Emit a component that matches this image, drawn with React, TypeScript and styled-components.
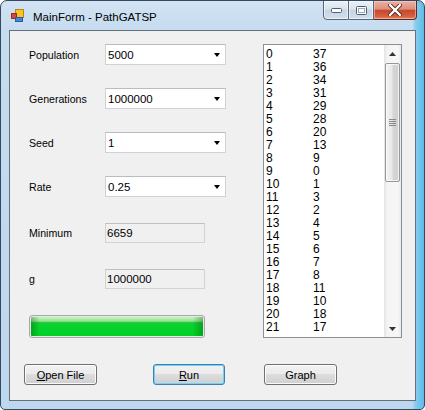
import React from "react";
import styled, { createGlobalStyle } from "styled-components";

const Global = createGlobalStyle`
  html, body { margin: 0; padding: 0; background: #ffffff; }
  * { box-sizing: border-box; }
`;

const Window = styled.div`
  width: 425px;
  height: 410px;
  border: 1px solid #34495f;
  border-radius: 7px 7px 5px 5px;
  background:
    linear-gradient(90deg, rgba(255,255,255,0) 97.2%, #86cdee 98%, #5bbbe9 100%),
    linear-gradient(180deg, #d2e3f3 0px, #c6dcf0 28px, #bdd7ee 100%);
  display: flex;
  flex-direction: column;
  padding: 0 8px 8px 8px;
  overflow: hidden;
  font-family: "Liberation Sans", Arial, sans-serif;
`;

const TitleBar = styled.div`
  height: 29px;
  display: flex;
  align-items: flex-start;
`;

const AppIcon = styled.svg`
  margin: 8px 0 0 2px;
  flex: none;
`;

const Title = styled.div`
  margin: 10px 0 0 9px;
  font-family: "Liberation Sans", Arial, sans-serif;
  font-size: 11.5px;
  color: #000;
  line-height: 12px;
  flex: 1;
`;

const CaptionGroup = styled.div`
  display: flex;
  margin-top: -1px;
  margin-right: -1px;
`;

const CapBtn = styled.div<{ $w: number }>`
  width: ${(p) => p.$w}px;
  height: 20px;
  border: 1px solid #566778;
  border-left-width: 0;
  background: linear-gradient(180deg, #eaf0f7 0%, #dbe5ef 45%, #c6d4e4 50%, #d2deeb 100%);
  box-shadow: inset 0 0 0 1px rgba(255,255,255,0.55);
  display: flex;
  align-items: center;
  justify-content: center;
  &:first-child {
    border-left-width: 1px;
    border-bottom-left-radius: 4px;
  }
`;

const CloseBtn = styled.div`
  width: 43px;
  height: 20px;
  border: 1px solid #5a2a22;
  border-left-width: 0;
  border-bottom-right-radius: 4px;
  background: linear-gradient(180deg, #eab1a4 0%, #de8f7c 45%, #c9472d 52%, #d4603f 85%, #e08866 100%);
  box-shadow: inset 0 0 0 1px rgba(255,220,210,0.5);
  display: flex;
  align-items: center;
  justify-content: center;
`;

const Client = styled.div`
  flex: 1;
  border: 1px solid #66707b;
  background: #f0f0f0;
  display: flex;
  flex-direction: column;
  font-family: "Liberation Sans", Arial, sans-serif;
  font-size: 11px;
  color: #000;
`;

const Main = styled.div`
  display: flex;
  padding: 13px 0 0 19px;
`;

const Form = styled.div`
  width: 234px;
  display: flex;
  flex-direction: column;
`;

const Row = styled.div<{ $h: number; $mt: number }>`
  height: ${(p) => p.$h}px;
  margin-top: ${(p) => p.$mt}px;
  display: flex;
  align-items: center;
`;

const Label = styled.div`
  width: 76px;
  font-size: 10.6px;
`;

const Combo = styled.div`
  width: 121px;
  height: 100%;
  background: #ffffff;
  border: 1px solid #cfd1d6;
  border-top-color: #b9bcc2;
  display: flex;
  align-items: center;
  padding-left: 2px;
  font-size: 11.5px;
`;

const ComboText = styled.span`
  flex: 1;
`;

const Arrow = styled.span`
  width: 0;
  height: 0;
  border-left: 3.5px solid transparent;
  border-right: 3.5px solid transparent;
  border-top: 4px solid #000;
  margin-right: 5px;
  margin-top: 1px;
`;

const TextBox = styled.div`
  width: 100px;
  height: 100%;
  background: #f0f0f0;
  border: 1px solid #d3d3d3;
  border-top-color: #c0c0c0;
  display: flex;
  align-items: center;
  padding-left: 1px;
  font-size: 11.5px;
`;

const Progress = styled.div`
  width: 176px;
  height: 100%;
  border: 1px solid #a9a9a9;
  border-radius: 3px;
  padding: 1px;
  background: #e6e6e6;
`;

const ProgressFill = styled.div`
  height: 100%;
  border-radius: 1px;
  background:
    linear-gradient(90deg, rgba(0,80,0,0.35) 0%, rgba(0,80,0,0) 5%, rgba(0,80,0,0) 94%, rgba(0,80,0,0.35) 100%),
    linear-gradient(180deg, #c7f3c2 0%, #8ee58d 22%, #19c83a 30%, #04d42a 55%, #02cf27 100%);
`;

const ListBox = styled.div`
  width: 139px;
  height: 294px;
  background: #ffffff;
  border: 1px solid #8a9099;
  display: flex;
  font-size: 12px;
`;

const ListItems = styled.div`
  flex: 1;
  padding: 3px 0 0 2px;
  overflow: hidden;
`;

const ListRow = styled.div`
  display: flex;
  height: 13px;
  line-height: 13px;
`;

const Cell = styled.span<{ $w?: number }>`
  width: ${(p) => (p.$w ? `${p.$w}px` : "auto")};
`;

const ScrollBar = styled.div`
  width: 17px;
  display: flex;
  flex-direction: column;
  background: linear-gradient(90deg, #e4e4e4 0%, #f4f4f4 20%, #f7f7f7 80%, #e9e9e9 100%);
`;

const ScrollArrow = styled.div`
  height: 17px;
  display: flex;
  align-items: center;
  justify-content: center;
`;

const Thumb = styled.div`
  margin: 1px 1px 0 1px;
  height: 119px;
  border: 1px solid #979797;
  border-radius: 2px;
  background: linear-gradient(90deg, #f3f3f3 0%, #e8e8e8 45%, #d6d6d6 55%, #cfcfcf 100%);
  box-shadow: inset 0 0 0 1px rgba(255,255,255,0.7);
  display: flex;
  align-items: center;
  justify-content: center;
`;

const Track = styled.div`
  flex: 1;
`;

const ButtonRow = styled.div`
  display: flex;
  padding-left: 14px;
  margin-top: 26px;
`;

const Button = styled.div<{ $w: number; $ml: number; $default?: boolean }>`
  width: ${(p) => p.$w}px;
  height: 21px;
  margin-left: ${(p) => p.$ml}px;
  border: 1px solid ${(p) => (p.$default ? "#3c7fb1" : "#707070")};
  border-radius: 3px;
  background: linear-gradient(180deg, #f2f2f2 0%, #ebebeb 48%, #dddddd 50%, #cfcfcf 100%);
  box-shadow: ${(p) =>
    p.$default
      ? "inset 0 0 0 1px #6fd3f6"
      : "inset 0 0 0 1px rgba(255,255,255,0.85)"};
  display: flex;
  align-items: center;
  justify-content: center;
  font-size: 11px;
`;

const Key = styled.span`
  text-decoration: underline;
`;

const values = [37, 36, 34, 31, 29, 28, 20, 13, 9, 0, 1, 3, 2, 4, 5, 6, 7, 8, 11, 10, 18, 17];

export default function App() {
  return (
    <>
      <Global />
      <Window>
        <TitleBar>
          <AppIcon width="13" height="14" viewBox="0 0 13 14">
            <rect x="4.5" y="0.5" width="8" height="8" fill="#f6c521" stroke="#b58a12" />
            <rect x="0.5" y="4.5" width="5" height="5" fill="#e0443a" stroke="#9b2a22" />
            <rect x="4.5" y="8.5" width="7" height="4" fill="#4a84d8" stroke="#2c5aa0" />
          </AppIcon>
          <Title>MainForm - PathGATSP</Title>
          <CaptionGroup>
            <CapBtn $w={26}>
              <svg width="11" height="5" viewBox="0 0 11 5">
                <rect x="0.5" y="0.5" width="10" height="4" rx="1" fill="#ffffff" stroke="#4d5d6f" />
              </svg>
            </CapBtn>
            <CapBtn $w={25}>
              <svg width="11" height="9" viewBox="0 0 11 9">
                <rect x="0.5" y="0.5" width="10" height="8" rx="1" fill="#ffffff" stroke="#4d5d6f" />
                <rect x="2.5" y="2.5" width="6" height="4" fill="none" stroke="#9aa8b8" />
              </svg>
            </CapBtn>
            <CloseBtn>
              <svg width="14" height="12" viewBox="0 0 14 12">
                <path d="M2 1 L12 11 M12 1 L2 11" stroke="#5a2620" strokeWidth="4" strokeLinecap="round" />
                <path d="M2 1 L12 11 M12 1 L2 11" stroke="#ffffff" strokeWidth="2.4" strokeLinecap="round" />
              </svg>
            </CloseBtn>
          </CaptionGroup>
        </TitleBar>
        <Client>
          <Main>
            <Form>
              <Row $h={21} $mt={0}>
                <Label>Population</Label>
                <Combo><ComboText>5000</ComboText><Arrow /></Combo>
              </Row>
              <Row $h={21} $mt={23}>
                <Label>Generations</Label>
                <Combo><ComboText>1000000</ComboText><Arrow /></Combo>
              </Row>
              <Row $h={21} $mt={23}>
                <Label>Seed</Label>
                <Combo><ComboText>1</ComboText><Arrow /></Combo>
              </Row>
              <Row $h={21} $mt={23}>
                <Label>Rate</Label>
                <Combo><ComboText>0.25</ComboText><Arrow /></Combo>
              </Row>
              <Row $h={20} $mt={26}>
                <Label>Minimum</Label>
                <TextBox>6659</TextBox>
              </Row>
              <Row $h={20} $mt={26}>
                <Label>g</Label>
                <TextBox>1000000</TextBox>
              </Row>
              <Row $h={23} $mt={26}>
                <Progress><ProgressFill /></Progress>
              </Row>
            </Form>
            <ListBox>
              <ListItems>
                {values.map((v, i) => (
                  <ListRow key={i}>
                    <Cell $w={47}>{i}</Cell>
                    <Cell>{v}</Cell>
                  </ListRow>
                ))}
              </ListItems>
              <ScrollBar>
                <ScrollArrow>
                  <svg width="7" height="4" viewBox="0 0 7 4"><path d="M0 4 L3.5 0 L7 4 Z" fill="#333" /></svg>
                </ScrollArrow>
                <Thumb>
                  <svg width="7" height="7" viewBox="0 0 7 7">
                    <path d="M0 0.5 H7 M0 2.5 H7 M0 4.5 H7 M0 6.5 H7" stroke="#8a8a8a" strokeWidth="1" />
                  </svg>
                </Thumb>
                <Track />
                <ScrollArrow>
                  <svg width="7" height="4" viewBox="0 0 7 4"><path d="M0 0 L7 0 L3.5 4 Z" fill="#333" /></svg>
                </ScrollArrow>
              </ScrollBar>
            </ListBox>
          </Main>
          <ButtonRow>
            <Button $w={73} $ml={0}><span><Key>O</Key>pen File</span></Button>
            <Button $w={72} $ml={56} $default><span><Key>R</Key>un</span></Button>
            <Button $w={73} $ml={39}><span>Graph</span></Button>
          </ButtonRow>
        </Client>
      </Window>
    </>
  );
}
